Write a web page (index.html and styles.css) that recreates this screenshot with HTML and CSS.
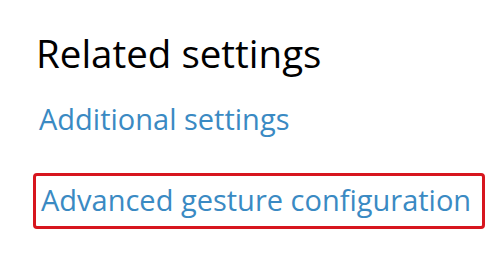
FILE: index.html
```html
<!DOCTYPE html>
<html>
<head>
<meta charset="utf-8">
<link rel="stylesheet" href="styles.css">
</head>
<body>
<div class="panel">
  <h1 class="title">Related settings</h1>
  <a class="link first">Additional settings</a>
  <div class="highlight">
    <a class="link">Advanced gesture configuration</a>
  </div>
</div>
</body>
</html>
```
FILE: styles.css
```css
html, body {
  margin: 0;
  padding: 0;
  background: #ffffff;
  width: 500px;
  height: 273px;
  overflow: hidden;
}
.panel {
  display: flex;
  flex-direction: column;
  align-items: flex-start;
  padding: 25px 0 0 36px;
  font-family: "Open Sans", "Noto Sans", sans-serif;
}
.title {
  margin: 0;
  font-weight: 400;
  font-size: 38.5px;
  line-height: 56px;
  color: #000000;
}
.link {
  display: block;
  color: #3a8ac3;
  font-size: 29px;
  line-height: 40px;
  text-decoration: none;
}
.first {
  margin-top: 18px;
  margin-left: 3px;
}
.highlight {
  margin-top: 34px;
  margin-left: -3px;
  border: 3px solid #d7161e;
  border-radius: 4px;
  padding: 4px 11px 6px 5px;
}
```
